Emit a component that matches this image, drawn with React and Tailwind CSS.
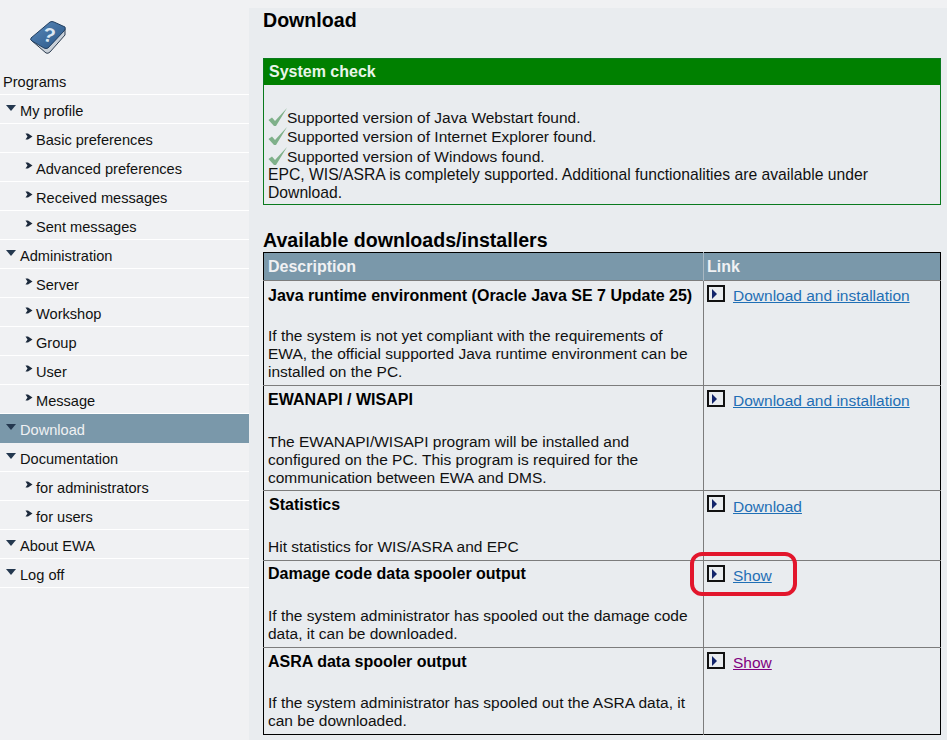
import React from 'react';

const menu = [
  { label: 'My profile', top: true },
  { label: 'Basic preferences' },
  { label: 'Advanced preferences' },
  { label: 'Received messages' },
  { label: 'Sent messages' },
  { label: 'Administration', top: true },
  { label: 'Server' },
  { label: 'Workshop' },
  { label: 'Group' },
  { label: 'User' },
  { label: 'Message' },
  { label: 'Download', top: true, active: true },
  { label: 'Documentation', top: true },
  { label: 'for administrators' },
  { label: 'for users' },
  { label: 'About EWA', top: true },
  { label: 'Log off', top: true },
];

const downloads = [
  {
    title: 'Java runtime environment (Oracle Java SE 7 Update 25)',
    text: 'If the system is not yet compliant with the requirements of EWA, the official supported Java runtime environment can be installed on the PC.',
    link: 'Download and installation',
    height: 'h-[105px]',
    pad: 'pt-[6px]',
    titleClass: 'h-[40px]',
    linkClass: 'mt-[1px]',
  },
  {
    title: 'EWANAPI / WISAPI',
    text: 'The EWANAPI/WISAPI program will be installed and configured on the PC. This program is required for the communication between EWA and DMS.',
    link: 'Download and installation',
    height: 'h-[105px]',
    pad: 'pt-[5px]',
    titleClass: 'h-[42px]',
    linkClass: 'mt-[1px]',
  },
  {
    title: 'Statistics',
    text: 'Hit statistics for WIS/ASRA and EPC',
    link: 'Download',
    height: 'h-[70px]',
    pad: 'pt-[5px]',
    titleClass: 'h-[42px] pl-px',
    linkClass: 'mt-[2px]',
  },
  {
    title: 'Damage code data spooler output',
    text: 'If the system administrator has spooled out the damage code data, it can be downloaded.',
    link: 'Show',
    height: 'h-[87px]',
    pad: 'pt-[4px]',
    titleClass: 'h-[42px]',
    linkClass: 'mt-[1px]',
  },
  {
    title: 'ASRA data spooler output',
    text: 'If the system administrator has spooled out the ASRA data, it can be downloaded.',
    link: 'Show',
    visited: true,
    height: 'h-[87px]',
    pad: 'pt-[5px]',
    titleClass: 'h-[41px]',
    linkClass: 'mt-[1px]',
  },
];

const checks = [
  { text: 'Supported version of Java Webstart found.', height: 'h-[20px]' },
  { text: 'Supported version of Internet Explorer found.', height: 'h-[19px]' },
  { text: 'Supported version of Windows found.', height: 'h-[20px]' },
];

const BookIcon = () => (
  <svg width="40" height="40" viewBox="0 0 40 40">
    <defs>
      <linearGradient id="cover" x1="0" y1="0" x2="1" y2="1">
        <stop offset="0" stopColor="#5a8abb" />
        <stop offset="1" stopColor="#2a5585" />
      </linearGradient>
    </defs>
    <path d="M3 22 L18 35 Q20 36 22 34 L37 17 L37 11 L19 30 L4 19 Z" fill="#c9d0d8" stroke="#2d3d50" strokeWidth="1" />
    <path d="M3 20 L22 4 Q24 3 26 4 L37 9 Q38 11 36 13 L20 30 Q18 31 16 30 L4 23 Q2 22 3 20 Z" fill="url(#cover)" stroke="#223f60" strokeWidth="1" />
    <text x="21" y="24" fontSize="20" fontWeight="700" fill="#dce7f1" textAnchor="middle" fontFamily="'Liberation Sans', sans-serif" transform="rotate(14 21 17)">?</text>
  </svg>
);

const CheckIcon = () => (
  <svg width="19" height="20" viewBox="0 0 19 20" className="shrink-0">
    <path d="M0.5 13 L4 10.5 L7 14 L19 1 L8 19 L6 19 Z" fill="#7fb08a" />
  </svg>
);

const ArrowBox = () => (
  <span className="flex h-[17px] w-[18px] shrink-0 items-center justify-center border-2 border-[#111] bg-[#e9ecef]">
    <span className="mr-[3px] h-0 w-0 border-y-[5px] border-l-[5px] border-y-transparent border-l-[#12246b]" />
  </span>
);

const MenuItem = ({ item }) => {
  if (item.top) {
    return (
      <div className={`flex h-[29px] items-center border-b-[1px] pl-[6px] pt-[5px] ${item.active ? 'border-[#7a98aa] bg-[#7a98aa] text-[#f0f1f3]' : 'border-white'}`}>
        <span className="mb-[8px] mr-[4px] h-0 w-0 border-x-[5px] border-t-[6px] border-x-transparent border-t-[#24384f]" />
        <span>{item.label}</span>
      </div>
    );
  }
  return (
    <div className="flex h-[29px] items-center border-b-[1px] border-white pl-[25px] pt-[5px]">
      <span className="mb-[7px] mr-[3px] h-[8px] w-[8px] text-[#1c2a3c]">
        <svg width="8" height="8" viewBox="0 0 8 8">
          <path d="M0.5 0.5 L3 0.5 L7.5 3.5 L3 6.5 L0.5 6.5 L2.5 3.5 Z" fill="currentColor" />
        </svg>
      </span>
      <span>{item.label}</span>
    </div>
  );
};

export default function App() {
  return (
    <div className="relative flex h-[740px] w-[947px] overflow-hidden bg-[#f0f1f3] font-['Liberation_Sans',Arial,sans-serif] text-[#111]">
      {/* Sidebar */}
      <div className="w-[249px] shrink-0 text-[14.6px]">
        <div className="h-[66px] pl-[28px] pt-[18px]">
          <BookIcon />
        </div>
        <div className="flex h-[29px] items-center border-b-[1px] border-white pl-[3px] pt-[5px]">Programs</div>
        {menu.map((item) => (
          <MenuItem key={item.label} item={item} />
        ))}
      </div>

      {/* Main */}
      <div className="mt-[8px] flex-1 bg-[#e9ecef] pl-[14px] pr-[6px]">
        <h1 className="h-[50px] text-[19.6px] leading-[24px] font-bold text-black">Download</h1>

        <div className="h-[147px] border border-[#0a7a1e]">
          <div className="flex h-[26px] items-center bg-[#008000] pl-[5px] text-[16px] font-bold text-[#e8f5e8]">System check</div>
          <div className="px-[4px] pt-[22px] text-[15.5px]">
            {checks.map((c) => (
              <div key={c.text} className={`flex items-end ${c.height}`}>
                <CheckIcon />
                <span className="leading-[18px]">{c.text}</span>
              </div>
            ))}
            <p className="text-[15.7px] leading-[18px]">EPC, WIS/ASRA is completely supported. Additional functionalities are available under Download.</p>
          </div>
        </div>

        <h2 className="mt-[24px] h-[23px] text-[19.6px] leading-[23px] font-bold text-black">Available downloads/installers</h2>

        <table className="w-[678px] table-fixed border-collapse border border-black">
          <colgroup>
            <col className="w-[440px]" />
            <col />
          </colgroup>
          <thead>
            <tr className="h-[28px] bg-[#7a98aa] text-left text-[16px] font-bold text-[#f0f1f3]">
              <th className="border-r border-[#a9b8c2] pl-[4px] font-bold">Description</th>
              <th className="pl-[3px] font-bold">Link</th>
            </tr>
          </thead>
          <tbody>
            {downloads.map((row) => (
              <tr key={row.title} className={`${row.height} border-t border-[#7c7c7c] align-top`}>
                <td className={`border-r border-[#7c7c7c] pl-[4px] pr-[2px] text-[15.5px] leading-[18px] ${row.pad}`}>
                  <div className={`text-[16px] font-bold text-black ${row.titleClass}`}>{row.title}</div>
                  <p>{row.text}</p>
                </td>
                <td className="pl-[3px] pt-[4px]">
                  <div className="flex items-start gap-[8px]">
                    <ArrowBox />
                    <a href="#" className={`text-[15.5px] leading-[20px] underline ${row.linkClass} ${row.visited ? 'text-[#800080]' : 'text-[#1f6fb5]'}`}>{row.link}</a>
                  </div>
                </td>
              </tr>
            ))}
          </tbody>
        </table>
      </div>

      {/* Red annotation drawn over the screenshot */}
      <div className="absolute left-[690px] top-[552px] h-[44px] w-[107px] rounded-[12px] border-[4px] border-[#e2162c]" />
    </div>
  );
}
